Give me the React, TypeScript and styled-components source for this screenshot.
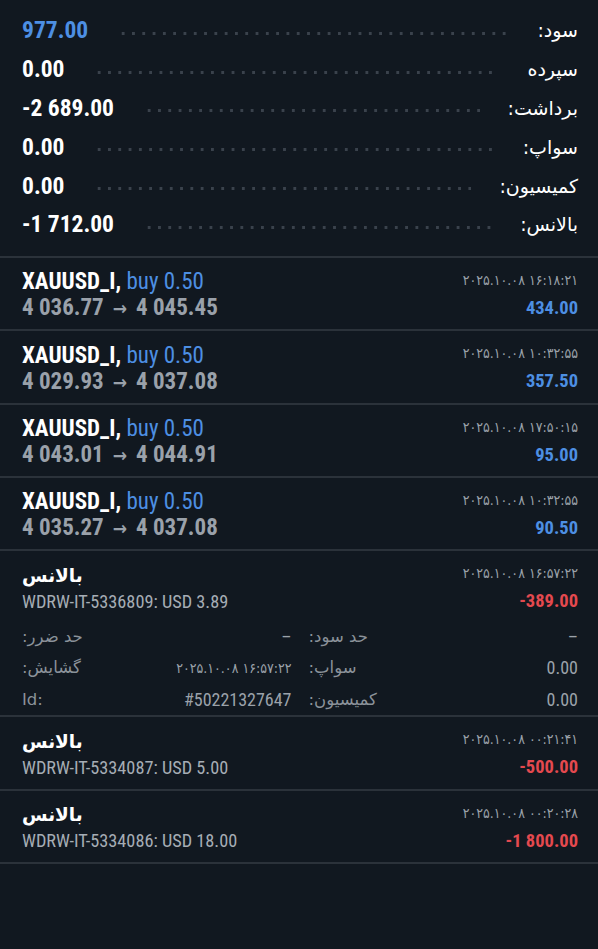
import React from 'react'
import styled, { createGlobalStyle } from 'styled-components'

const GlobalStyle = createGlobalStyle`
  html, body {
    margin: 0;
    padding: 0;
    background: #111820;
  }
  body {
    font-family: 'Roboto Condensed', Roboto, 'DejaVu Sans', sans-serif;
    font-stretch: condensed;
    color: #ffffff;
  }
`

const BLUE = '#4d8fe3'
const RED = '#e4494f'
const PERSIAN = "'DejaVu Sans', sans-serif"

const Page = styled.div`
  min-height: 949px;
  background: #111820;
`

const Summary = styled.div`
  padding: 11px 20px 12px 22px;
  border-bottom: 2px solid #2b323a;
`

const SummaryRow = styled.div`
  display: flex;
  align-items: center;
  height: 38.8px;
`

const SummaryValue = styled.span<{ $tone?: string }>`
  font-size: 23.5px;
  font-weight: 700;
  color: ${(p) => p.$tone || '#ffffff'};
`

const Leader = styled.span`
  flex: 1;
  height: 3px;
  margin: 6px 28px 0 30px;
  background-image: radial-gradient(circle, #3a424c 1.4px, transparent 1.6px);
  background-size: 10.3px 3px;
  background-repeat: repeat-x;
`

const SummaryLabel = styled.span`
  font-family: ${PERSIAN};
  font-stretch: normal;
  font-size: 19px;
  direction: rtl;
  color: #ffffff;
`

const Entry = styled.div`
  padding: 11px 20px 8.4px 22px;
  border-bottom: 2px solid #2b323a;
`

const Line = styled.div`
  display: flex;
  justify-content: space-between;
  align-items: center;
  height: 26px;
`

const Title = styled.span`
  font-size: 23px;
  font-weight: 700;
  color: #ffffff;
`

const PersianTitle = styled.span`
  font-family: ${PERSIAN};
  font-stretch: normal;
  font-size: 18.5px;
  font-weight: 700;
  color: #ffffff;
`

const Side = styled.span`
  font-weight: 400;
  color: ${BLUE};
`

const Prices = styled.span`
  font-size: 23px;
  font-weight: 700;
  color: #9aa1aa;
`

const Arrow = styled.span`
  font-size: 19px;
  margin: 0 9px 0 9px;
`

const Stamp = styled.span`
  font-family: ${PERSIAN};
  font-size: 14px;
  color: #9ba2aa;
  direction: ltr;
  margin-top: -4px;
`

const Amount = styled.span<{ $tone: string }>`
  font-size: 18.5px;
  font-weight: 700;
  color: ${(p) => p.$tone};
`

const Comment = styled.span`
  font-size: 18.3px;
  color: #a6adb5;
`

const Details = styled.div`
  display: grid;
  grid-template-columns: 1fr 1fr;
  column-gap: 17px;
  margin: 6px 0 -8px;
`

const Detail = styled.div`
  display: flex;
  justify-content: space-between;
  align-items: center;
  height: 31.5px;
`

const DetailLabel = styled.span`
  font-family: ${PERSIAN};
  font-stretch: normal;
  font-size: 16.5px;
  unicode-bidi: plaintext;
  color: #8b929a;
`

const DetailValue = styled.span<{ $stamp?: boolean }>`
  font-family: ${(p) => (p.$stamp ? PERSIAN : 'inherit')};
  font-size: ${(p) => (p.$stamp ? '14px' : '18px')};
  color: #9ba2aa;
  direction: ltr;
`

const summary = [
  { label: 'سود:', value: '977.00', tone: BLUE },
  { label: 'سپرده', value: '0.00' },
  { label: 'برداشت:', value: '-2 689.00' },
  { label: 'سواپ:', value: '0.00' },
  { label: 'کمیسیون:', value: '0.00' },
  { label: 'بالانس:', value: '-1 712.00' },
]

const trades = [
  { open: '4 036.77', close: '4 045.45', time: '۲۰۲۵.۱۰.۰۸ ۱۶:۱۸:۲۱', profit: '434.00' },
  { open: '4 029.93', close: '4 037.08', time: '۲۰۲۵.۱۰.۰۸ ۱۰:۳۲:۵۵', profit: '357.50' },
  { open: '4 043.01', close: '4 044.91', time: '۲۰۲۵.۱۰.۰۸ ۱۷:۵۰:۱۵', profit: '95.00' },
  { open: '4 035.27', close: '4 037.08', time: '۲۰۲۵.۱۰.۰۸ ۱۰:۳۲:۵۵', profit: '90.50' },
]

const balances = [
  {
    comment: 'WDRW-IT-5336809: USD 3.89',
    time: '۲۰۲۵.۱۰.۰۸ ۱۶:۵۷:۲۲',
    amount: '-389.00',
    details: [
      { label: 'حد ضرر:', value: '–' },
      { label: 'حد سود:', value: '–' },
      { label: 'گشایش:', value: '۲۰۲۵.۱۰.۰۸ ۱۶:۵۷:۲۲', stamp: true },
      { label: 'سواپ:', value: '0.00' },
      { label: 'Id:', value: '#50221327647' },
      { label: 'کمیسیون:', value: '0.00' },
    ],
  },
  { comment: 'WDRW-IT-5334087: USD 5.00', time: '۲۰۲۵.۱۰.۰۸ ۰۰:۲۱:۴۱', amount: '-500.00' },
  { comment: 'WDRW-IT-5334086: USD 18.00', time: '۲۰۲۵.۱۰.۰۸ ۰۰:۲۰:۲۸', amount: '-1 800.00' },
]

const App = () => (
  <Page>
    <GlobalStyle />
    <Summary>
      {summary.map((row) => (
        <SummaryRow key={row.label}>
          <SummaryValue $tone={row.tone}>{row.value}</SummaryValue>
          <Leader />
          <SummaryLabel>{row.label}</SummaryLabel>
        </SummaryRow>
      ))}
    </Summary>

    {trades.map((t, i) => (
      <Entry key={i}>
        <Line>
          <Title>
            XAUUSD_I, <Side>buy 0.50</Side>
          </Title>
          <Stamp>{t.time}</Stamp>
        </Line>
        <Line>
          <Prices>
            {t.open}
            <Arrow>→</Arrow>
            {t.close}
          </Prices>
          <Amount $tone={BLUE}>{t.profit}</Amount>
        </Line>
      </Entry>
    ))}

    {balances.map((b, i) => (
      <Entry key={i}>
        <Line>
          <PersianTitle>بالانس</PersianTitle>
          <Stamp>{b.time}</Stamp>
        </Line>
        <Line>
          <Comment>{b.comment}</Comment>
          <Amount $tone={RED}>{b.amount}</Amount>
        </Line>
        {b.details && (
          <Details>
            {b.details.map((d) => (
              <Detail key={d.label}>
                <DetailLabel>{d.label}</DetailLabel>
                <DetailValue $stamp={d.stamp}>{d.value}</DetailValue>
              </Detail>
            ))}
          </Details>
        )}
      </Entry>
    ))}
  </Page>
)

export default App
